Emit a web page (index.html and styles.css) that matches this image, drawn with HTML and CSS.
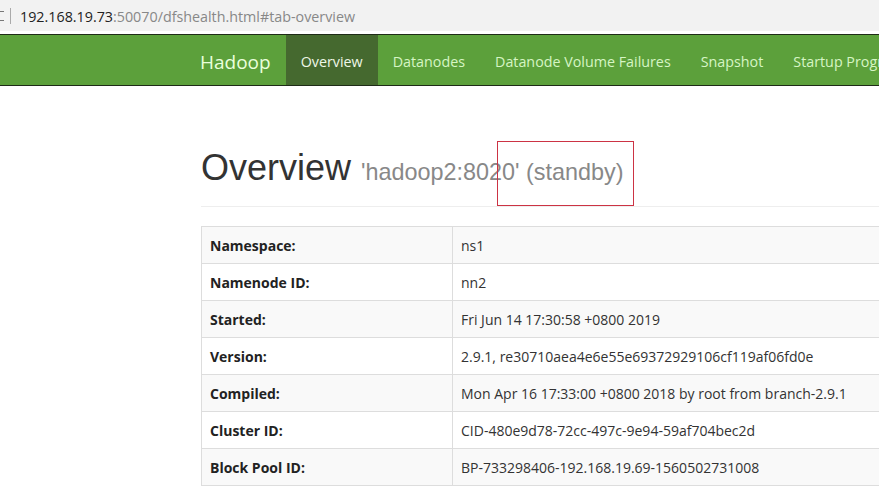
FILE: index.html
```html
<!DOCTYPE html>
<html>
<head>
<meta charset="utf-8">
<link rel="stylesheet" href="styles.css">
</head>
<body>
<div class="addr">
  <span class="lock"></span>
  <span class="sep"></span>
  <span class="url"><span class="host">192.168.19.73</span>:50070/dfshealth.html#tab-overview</span>
</div>
<div class="nav">
  <div class="nav-inner">
    <span class="brand">Hadoop</span>
    <span class="item active">Overview</span>
    <span class="item">Datanodes</span>
    <span class="item">Datanode Volume Failures</span>
    <span class="item">Snapshot</span>
    <span class="item">Startup Progress</span>
  </div>
</div>
<div class="content">
  <div class="page-header">
    <h1>Overview <small>'hadoop2:8020' (standby)</small></h1>
    <div class="mark"></div>
  </div>
  <table class="info">
    <tr><th>Namespace:</th><td>ns1</td></tr>
    <tr><th>Namenode ID:</th><td>nn2</td></tr>
    <tr><th>Started:</th><td>Fri Jun 14 17:30:58 +0800 2019</td></tr>
    <tr><th>Version:</th><td>2.9.1, re30710aea4e6e55e69372929106cf119af06fd0e</td></tr>
    <tr><th>Compiled:</th><td>Mon Apr 16 17:33:00 +0800 2018 by root from branch-2.9.1</td></tr>
    <tr><th>Cluster ID:</th><td>CID-480e9d78-72cc-497c-9e94-59af704bec2d</td></tr>
    <tr><th>Block Pool ID:</th><td>BP-733298406-192.168.19.69-1560502731008</td></tr>
  </table>
</div>
</body>
</html>
```
FILE: styles.css
```css
html, body {
  margin: 0;
  padding: 0;
  background: #fff;
  overflow: hidden;
  width: 879px;
  height: 498px;
}
body {
  font-family: "Open Sans", "Noto Sans", sans-serif;
  color: #333;
}
.addr {
  height: 31px;
  background: #f2f2f2;
  border-bottom: 3px solid #fff;
  display: flex;
  align-items: center;
  white-space: nowrap;
}
.lock {
  width: 4px;
  height: 8px;
  border-top: 1px solid #777;
  border-bottom: 1px solid #777;
}
.sep {
  width: 1px;
  height: 16px;
  background: #aaa;
  margin-left: 6px;
}
.url {
  margin-left: 9px;
  font-size: 14.3px;
  color: #888;
  padding-top: 2px;
}
.host { color: #222; }
.nav {
  height: 50px;
  background: #5ca03b;
  border-top: 1px solid #1e2b17;
  border-bottom: 1px solid #1e2b17;
  overflow: hidden;
}
.nav-inner {
  display: flex;
  height: 50px;
  margin-left: 200px;
  white-space: nowrap;
}
.brand {
  font-size: 19px;
  color: #eaffdc;
  line-height: 50px;
  padding-top: 2px;
  margin-right: 15px;
}
.item {
  font-size: 14.3px;
  color: #d6f5c4;
  line-height: 50px;
  padding: 2px 15px 0;
}
.item.active {
  background: #45692f;
  color: #eef7e8;
}
.content {
  margin-left: 201px;
  width: 1000px;
}
.page-header {
  position: relative;
  margin-top: 62px;
  padding-bottom: 4px;
  border-bottom: 1px solid #eee;
  margin-bottom: 19px;
}
h1 {
  font-family: "Liberation Sans", Arial, sans-serif;
  font-weight: 400;
  font-size: 36px;
  line-height: 40px;
  margin: 20px 0 10px;
  color: #333;
}
h1 small {
  font-size: 23.4px;
  color: #888;
}
.mark {
  position: absolute;
  left: 296px;
  top: -7px;
  width: 135px;
  height: 63px;
  border: 1px solid #cc3344;
}
.info {
  border-collapse: collapse;
  width: 1000px;
  font-size: 14px;
}
.info th, .info td {
  border: 1px solid #ddd;
  height: 36px;
  padding: 0 8px;
  text-align: left;
  vertical-align: middle;
}
.info th {
  width: 234px;
  font-weight: 700;
  color: #222;
}
.info td { color: #333; }
.info tr:nth-child(odd) { background: #f9f9f9; }
```
